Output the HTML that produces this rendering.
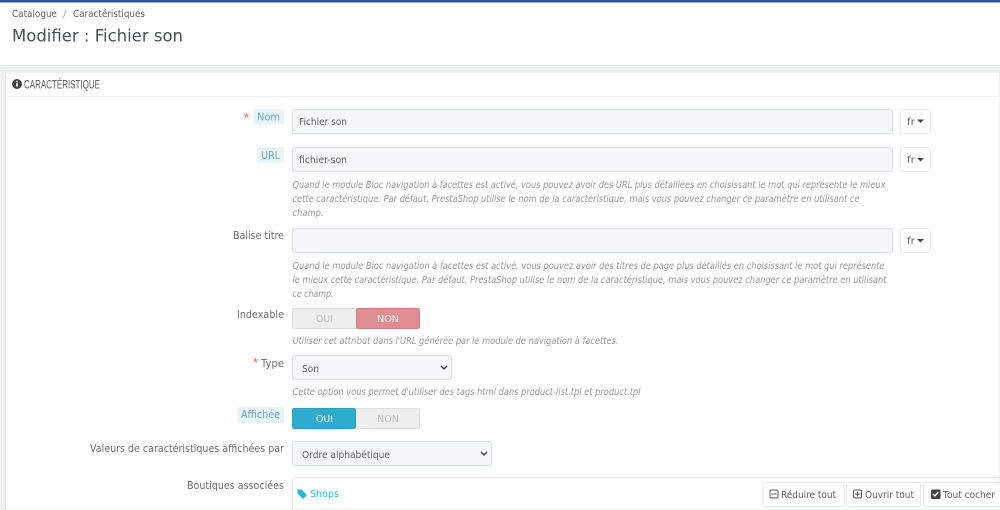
<!DOCTYPE html>
<html lang="fr"><head><meta charset="utf-8"><title>Modifier : Fichier son</title>
<style>
html,body{margin:0;padding:0;width:1000px;height:510px;overflow:hidden;background:#fff}
svg{display:block;filter:blur(.35px)}
text{font-family:"DejaVu Sans",sans-serif}
.l{font-size:10.5px;fill:#6c6c6c}
.a{font-size:10.5px;fill:#6fa3c7}
.h{font-size:9.5px;font-style:italic;fill:#969696}
.v{font-size:9.5px;fill:#5c5c5c}
.b{font-size:9.5px;fill:#5c5c5c}
.s{font-size:10px}
</style></head><body>
<svg width="1000" height="510" viewBox="0 0 1000 510" xmlns="http://www.w3.org/2000/svg">
<rect width="1000" height="510" fill="#fff"/>
<rect width="1000" height="2.5" fill="#2f5392"/>
<rect y="65" width="1000" height="445" fill="#eff1f2"/>
<rect y="65" width="1000" height="1" fill="#e2e4e5"/>
<path d="M5.5 510V75a3 3 0 0 1 3-3H1000V510z" fill="#fff" stroke="#dfe3e5"/>
<rect x="8" y="96" width="992" height="1" fill="#eef0f1"/>

<text x="12" y="17" font-size="9.5" fill="#5c5c5c" textLength="45" lengthAdjust="spacingAndGlyphs">Catalogue</text>
<text x="63" y="17" font-size="9.5" fill="#999">/</text>
<text x="73" y="17" font-size="9.5" fill="#5c5c5c" textLength="72" lengthAdjust="spacingAndGlyphs">Caractéristiques</text>
<text x="12" y="41.5" font-size="17" fill="#4a4f55" textLength="171" lengthAdjust="spacingAndGlyphs">Modifier : Fichier son</text>

<circle cx="17" cy="84" r="5" fill="#444"/>
<rect x="16.2" y="83" width="1.6" height="3.6" fill="#fff"/><rect x="16.2" y="80.8" width="1.6" height="1.4" fill="#fff"/>
<text x="24" y="88.5" font-size="12" fill="#5c5c5c" style="font-family:'Liberation Sans',sans-serif" textLength="76" lengthAdjust="spacingAndGlyphs">CARACTÉRISTIQUE</text>

<!-- Nom -->
<text x="244" y="122" font-size="13" fill="#e8614a" style="font-family:'Liberation Sans',sans-serif">*</text>
<rect x="253" y="109" width="31" height="15.5" rx="2" fill="#e8f4fb"/>
<text x="257" y="120.5" class="a" textLength="23" lengthAdjust="spacingAndGlyphs">Nom</text>
<rect x="292.5" y="109.5" width="600" height="24" rx="2.5" fill="#f5f8f9" stroke="#d3e0e3"/>
<text x="299" y="125" class="v" textLength="48" lengthAdjust="spacingAndGlyphs">Fichier son</text>
<rect x="900.5" y="109.5" width="30" height="24" rx="2.5" fill="#fff" stroke="#e6e8e9"/>
<text x="907" y="125" class="v" textLength="8" lengthAdjust="spacingAndGlyphs">fr</text>
<path d="M917 119.5h7l-3.5 3.5z" fill="#444"/>

<!-- URL -->
<rect x="257" y="147" width="27" height="16" rx="2" fill="#e8f4fb"/>
<text x="261" y="159" class="a" textLength="19" lengthAdjust="spacingAndGlyphs">URL</text>
<rect x="292.5" y="147.5" width="600" height="24" rx="2.5" fill="#f5f8f9" stroke="#d3e0e3"/>
<text x="299" y="163" class="v" textLength="48" lengthAdjust="spacingAndGlyphs">fichier-son</text>
<rect x="900.5" y="147.5" width="30" height="24" rx="2.5" fill="#fff" stroke="#e6e8e9"/>
<text x="907" y="163" class="v" textLength="8" lengthAdjust="spacingAndGlyphs">fr</text>
<path d="M917 158h7l-3.5 3.5z" fill="#444"/>
<text x="292.5" y="188" class="h" textLength="593" lengthAdjust="spacingAndGlyphs">Quand le module Bloc navigation à facettes est activé, vous pouvez avoir des URL plus détaillées en choisissant le mot qui représente le mieux</text>
<text x="292.5" y="202" class="h" textLength="567" lengthAdjust="spacingAndGlyphs">cette caractéristique. Par défaut, PrestaShop utilise le nom de la caractéristique, mais vous pouvez changer ce paramètre en utilisant ce</text>
<text x="292.5" y="216" class="h" textLength="31" lengthAdjust="spacingAndGlyphs">champ.</text>

<!-- Balise -->
<text x="233" y="239" class="l" textLength="51" lengthAdjust="spacingAndGlyphs">Balise titre</text>
<rect x="292.5" y="228.5" width="600" height="24" rx="2.5" fill="#f5f8f9" stroke="#d3e0e3"/>
<rect x="900.5" y="228.5" width="30" height="24" rx="2.5" fill="#fff" stroke="#e6e8e9"/>
<text x="907" y="244" class="v" textLength="8" lengthAdjust="spacingAndGlyphs">fr</text>
<path d="M917 239h7l-3.5 3.5z" fill="#444"/>
<text x="292.5" y="269" class="h" textLength="592" lengthAdjust="spacingAndGlyphs">Quand le module Bloc navigation à facettes est activé, vous pouvez avoir des titres de page plus détaillés en choisissant le mot qui représente</text>
<text x="292.5" y="283" class="h" textLength="594" lengthAdjust="spacingAndGlyphs">le mieux cette caractéristique. Par défaut, PrestaShop utilise le nom de la caractéristique, mais vous pouvez changer ce paramètre en utilisant</text>
<text x="292.5" y="297" class="h" textLength="41" lengthAdjust="spacingAndGlyphs">ce champ.</text>

<!-- Indexable -->
<text x="237" y="318" class="l" textLength="47" lengthAdjust="spacingAndGlyphs">Indexable</text>
<rect x="292.5" y="308.5" width="127" height="20" rx="2" fill="#eeeeee" stroke="#dcdcdc"/>
<text x="316" y="322" class="s" fill="#bbb" textLength="17" lengthAdjust="spacingAndGlyphs">OUI</text>
<rect x="356.5" y="308.5" width="63" height="20" rx="2" fill="#e08c93" stroke="#d47f86"/>
<text x="377" y="322" class="s" fill="#fff" textLength="22" lengthAdjust="spacingAndGlyphs">NON</text>
<text x="292.5" y="344" class="h" textLength="326" lengthAdjust="spacingAndGlyphs">Utiliser cet attribut dans l'URL générée par le module de navigation à facettes.</text>

<!-- Type -->
<text x="253" y="367" font-size="13" fill="#e8614a" style="font-family:'Liberation Sans',sans-serif">*</text>
<text x="261" y="367" class="l" textLength="23" lengthAdjust="spacingAndGlyphs">Type</text>
<rect x="292.5" y="355.5" width="159" height="24" rx="2.5" fill="#f5f8f9" stroke="#d3e0e3"/>
<text x="302" y="372" class="v" textLength="17" lengthAdjust="spacingAndGlyphs">Son</text>
<path d="M441 366l3 3 3-3" fill="none" stroke="#444" stroke-width="1.5"/>
<text x="292.5" y="395" class="h" textLength="348" lengthAdjust="spacingAndGlyphs">Cette option vous permet d'utiliser des tags html dans product-list.tpl et product.tpl</text>

<!-- Affichée -->
<rect x="237" y="407" width="47" height="16" rx="2" fill="#e8f4fb"/>
<text x="241" y="418" class="a" textLength="39" lengthAdjust="spacingAndGlyphs">Affichée</text>
<rect x="292.5" y="408.5" width="127" height="20" rx="2" fill="#eeeeee" stroke="#dcdcdc"/>
<rect x="292.5" y="408.5" width="63" height="20" rx="2" fill="#2eacce" stroke="#299fbf"/>
<text x="316" y="422" class="s" fill="#fff" textLength="17" lengthAdjust="spacingAndGlyphs">OUI</text>
<text x="377" y="422" class="s" fill="#bbb" textLength="22" lengthAdjust="spacingAndGlyphs">NON</text>

<!-- Valeurs -->
<text x="90" y="452" class="l" textLength="194" lengthAdjust="spacingAndGlyphs">Valeurs de caractéristiques affichées par</text>
<rect x="292.5" y="441.5" width="199" height="24" rx="2.5" fill="#f5f8f9" stroke="#d3e0e3"/>
<text x="302" y="458" class="v" textLength="88" lengthAdjust="spacingAndGlyphs">Ordre alphabétique</text>
<path d="M481 452l3 3 3-3" fill="none" stroke="#444" stroke-width="1.5"/>

<!-- Boutiques -->
<text x="187" y="489" class="l" textLength="97" lengthAdjust="spacingAndGlyphs">Boutiques associées</text>
<path d="M292.5 510V480.5a3 3 0 0 1 3-3H1000V510z" fill="#fff" stroke="#e3e5e6"/>
<path d="M297.5 489.5h4l5.5 5.5-4 4-5.5-5.5z" fill="#25b9d7"/>
<text x="310" y="497" font-size="10" fill="#25b9d7" textLength="29" lengthAdjust="spacingAndGlyphs">Shops</text>

<rect x="763" y="482.5" width="81" height="24" rx="2" fill="#fff" stroke="#e3e5e6"/>
<rect x="770" y="490" width="8" height="8" rx="1.5" fill="none" stroke="#555"/><path d="M771.5 494h5" stroke="#555"/>
<text x="781" y="498" class="b" textLength="55" lengthAdjust="spacingAndGlyphs">Réduire tout</text>
<rect x="846.5" y="482.5" width="74" height="24" rx="2" fill="#fff" stroke="#e3e5e6"/>
<rect x="853.5" y="490" width="8" height="8" rx="1.5" fill="none" stroke="#555"/><path d="M855 494h5M857.5 491.5v5" stroke="#555"/>
<text x="865" y="498" class="b" textLength="49" lengthAdjust="spacingAndGlyphs">Ouvrir tout</text>
<path d="M1000 482.5H925.5a2 2 0 0 0-2 2V504.5a2 2 0 0 0 2 2H1000" fill="#fff" stroke="#e3e5e6"/>
<rect x="931" y="489.5" width="9.5" height="9.5" rx="1.5" fill="#444"/><path d="M933 494l1.8 2 3.5-3.8" fill="none" stroke="#fff" stroke-width="1.4"/>
<text x="943" y="498" class="b" textLength="52" lengthAdjust="spacingAndGlyphs">Tout cocher</text>
</svg>
</body></html>
